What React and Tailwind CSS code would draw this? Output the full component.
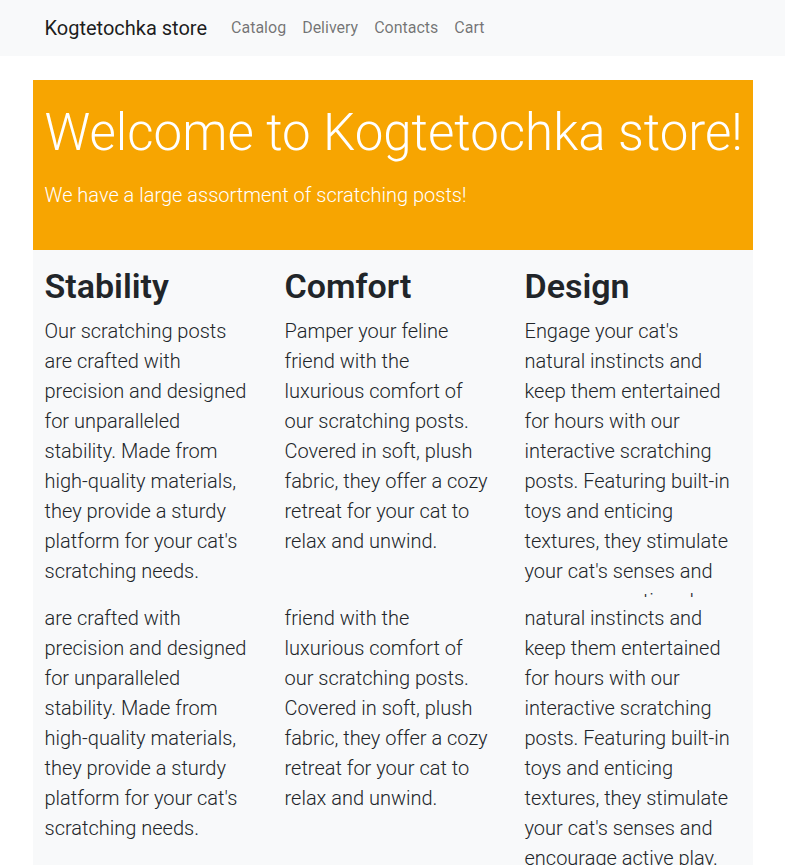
const FONT = { fontFamily: 'Roboto, "Noto Sans", sans-serif' };

const NAV_LINKS = ['Catalog', 'Delivery', 'Contacts', 'Cart'];

const FEATURES = [
  {
    title: 'Stability',
    lines: [
      'Our scratching posts',
      'are crafted with',
      'precision and designed',
      'for unparalleled',
      'stability. Made from',
      'high-quality materials,',
      'they provide a sturdy',
      "platform for your cat's",
      'scratching needs.',
    ],
  },
  {
    title: 'Comfort',
    lines: [
      'Pamper your feline',
      'friend with the',
      'luxurious comfort of',
      'our scratching posts.',
      'Covered in soft, plush',
      'fabric, they offer a cozy',
      'retreat for your cat to',
      'relax and unwind.',
    ],
  },
  {
    title: 'Design',
    lines: [
      "Engage your cat's",
      'natural instincts and',
      'keep them entertained',
      'for hours with our',
      'interactive scratching',
      'posts. Featuring built-in',
      'toys and enticing',
      'textures, they stimulate',
      "your cat's senses and",
      'encourage active play.',
    ],
  },
];

const Lines = ({ lines }) => (
  <p className="text-[20px] leading-[30px] font-light text-[#212529]">
    {lines.map((line) => (
      <span key={line} className="block whitespace-nowrap">
        {line}
      </span>
    ))}
  </p>
);

const App = () => {
  return (
    <div className="min-h-screen bg-white" style={FONT}>
      <nav className="h-14 bg-[#f8f9fa]">
        <div className="mx-auto flex h-full w-[720px] items-center px-3">
          <a href="#" className="mr-4 text-[20px] text-[#000000e6]">
            Kogtetochka store
          </a>
          <ul className="flex">
            {NAV_LINKS.map((item) => (
              <li key={item}>
                <a href="#" className="block px-2 text-[16px] text-[#0000008c]">
                  {item}
                </a>
              </li>
            ))}
          </ul>
        </div>
      </nav>

      <main className="mx-auto mt-6 w-[720px]">
        <section className="h-[170px] bg-[#f7a501] px-3 pt-[20px] text-white">
          <h1 className="text-[51px] leading-[66px] font-light whitespace-nowrap">
            Welcome to Kogtetochka store!
          </h1>
          <p className="mt-[14px] text-[20px] leading-[30px] font-light">
            We have a large assortment of scratching posts!
          </p>
        </section>

        <section className="bg-[#f8f9fa] pb-10">
          <div className="grid h-[347px] grid-cols-3 overflow-hidden">
            {FEATURES.map((feature) => (
              <div key={feature.title} className="px-3 pt-[17px]">
                <h2 className="mb-[11px] text-[34px] leading-[38px] font-semibold text-[#212529]">
                  {feature.title}
                </h2>
                <Lines lines={feature.lines} />
              </div>
            ))}
          </div>
          <div className="grid grid-cols-3 pt-[6px]">
            {FEATURES.map((feature) => (
              <div key={feature.title} className="px-3">
                <Lines lines={feature.lines.slice(1)} />
              </div>
            ))}
          </div>
        </section>
      </main>
    </div>
  );
};

export default App;
